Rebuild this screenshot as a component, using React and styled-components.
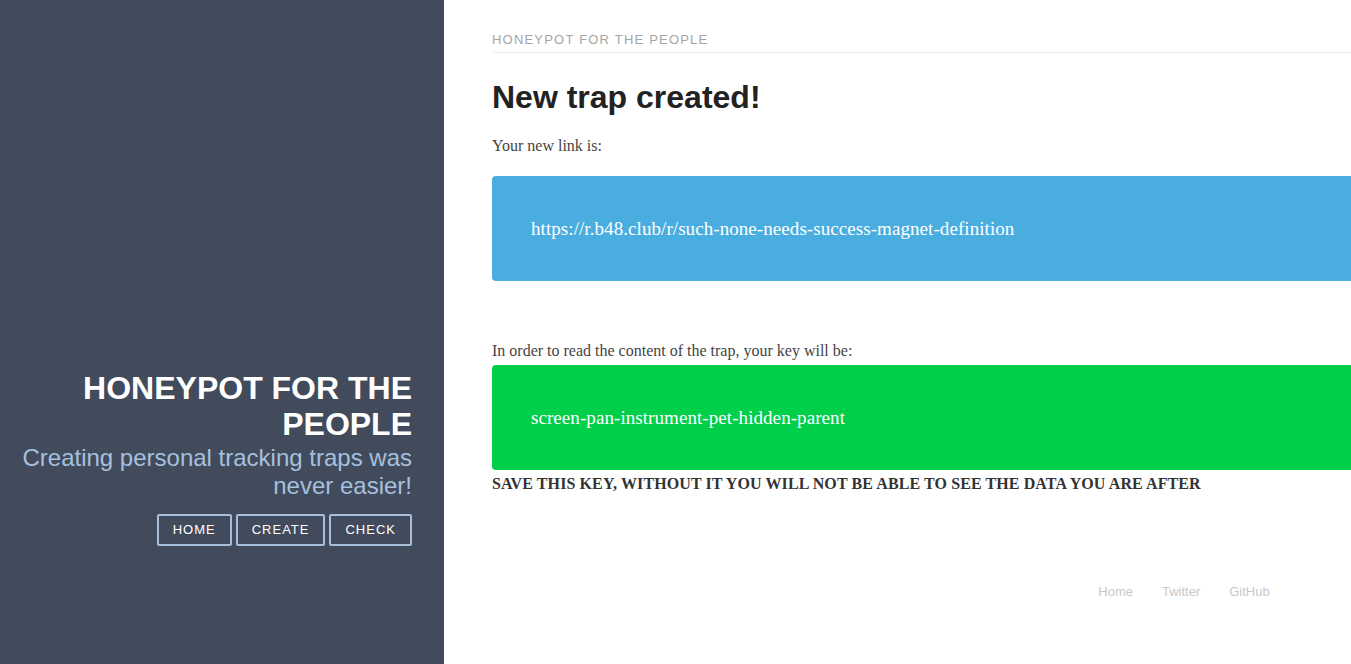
import React from 'react'
import styled, { createGlobalStyle } from "styled-components";

const GlobalStyle = createGlobalStyle`
    html, body {
        margin: 0;
        padding: 0;
        overflow: hidden;
    }
    body {
        font-family: "Liberation Serif", serif;
        color: #444;
    }
`;

const navItems = ['Home', 'Create', 'Check'];
const footerLinks = ['Home', 'Twitter', 'GitHub'];

function App() {
    return (
        <Page>
            <GlobalStyle />
            <Sidebar>
                <SidebarTitle>HONEYPOT FOR THE PEOPLE</SidebarTitle>
                <Lead>Creating personal tracking traps was never easier!</Lead>
                <NavRow>
                    {navItems.map((item) => (
                        <NavButton key={item}>{item}</NavButton>
                    ))}
                </NavRow>
            </Sidebar>
            <Content>
                <Masthead>HONEYPOT FOR THE PEOPLE</Masthead>
                <Heading>New trap created!</Heading>
                <Text>Your new link is:</Text>
                <Callout $color="#4aaddf">https://r.b48.club/r/such-none-needs-success-magnet-definition</Callout>
                <Text $top={60}>In order to read the content of the trap, your key will be:</Text>
                <Callout $color="#00cf4a" $top={4}>screen-pan-instrument-pet-hidden-parent</Callout>
                <Warning>SAVE THIS KEY, WITHOUT IT YOU WILL NOT BE ABLE TO SEE THE DATA YOU ARE AFTER</Warning>
                <Footer>
                    {footerLinks.map((link) => (
                        <FooterLink key={link}>{link}</FooterLink>
                    ))}
                </Footer>
            </Content>
        </Page>
    )
}

const Page = styled.div`
    display: flex;
    width: 100vw;
    height: 664px;
    overflow: hidden;
`;

const Sidebar = styled.aside`
    flex: 0 0 444px;
    box-sizing: border-box;
    display: flex;
    flex-direction: column;
    justify-content: flex-end;
    align-items: flex-end;
    text-align: right;
    padding: 0 32px 118px 20px;
    background: #414b5c;
    font-family: "Liberation Sans", Arial, sans-serif;
`;

const SidebarTitle = styled.h1`
    margin: 0 0 2px;
    font-size: 32px;
    line-height: 36px;
    font-weight: 700;
    color: #fff;
    max-width: 360px;
`;

const Lead = styled.p`
    margin: 0 0 14px;
    font-size: 24px;
    line-height: 28px;
    color: #a6c0de;
`;

const NavRow = styled.div`
    display: flex;
    gap: 4px;
`;

const NavButton = styled.a`
    display: flex;
    align-items: center;
    height: 32px;
    box-sizing: border-box;
    padding: 0 14px 1px;
    border: 2px solid #a8bfd9;
    border-radius: 2px;
    color: #fff;
    font-size: 13px;
    letter-spacing: 1px;
    text-transform: uppercase;
`;

const Content = styled.main`
    flex: 0 0 1384px;
    box-sizing: border-box;
    margin-left: 48px;
    padding-top: 32px;
`;

const Masthead = styled.div`
    font-family: "Liberation Sans", Arial, sans-serif;
    font-size: 13px;
    line-height: 15px;
    letter-spacing: 1.2px;
    color: #a5a5a5;
    padding-bottom: 5px;
    border-bottom: 1px solid #eee;
`;

const Heading = styled.h1`
    margin: 24px 0 0;
    font-family: "Liberation Sans", Arial, sans-serif;
    font-size: 32px;
    line-height: 40px;
    font-weight: 700;
    color: #222;
`;

const Text = styled.p`
    margin: ${({ $top }) => $top || 19}px 0 0;
    font-size: 16px;
    line-height: 20px;
    color: #444;
`;

const Callout = styled.div`
    margin-top: ${({ $top }) => $top ?? 20}px;
    height: 105px;
    box-sizing: border-box;
    display: flex;
    align-items: center;
    padding-left: 39px;
    border-radius: 4px;
    background: ${({ $color }) => $color};
    color: #fff;
    font-size: 19px;
    letter-spacing: 0.07px;
`;

const Warning = styled.p`
    margin: 4px 0 0;
    font-size: 16px;
    line-height: 20px;
    font-weight: 700;
    letter-spacing: 0.1px;
    color: #333;
`;

const Footer = styled.footer`
    display: flex;
    justify-content: center;
    gap: 29px;
    margin-top: 90px;
    font-family: "Liberation Sans", Arial, sans-serif;
`;

const FooterLink = styled.a`
    font-size: 13px;
    color: #c8c8c8;
`;

export default App
